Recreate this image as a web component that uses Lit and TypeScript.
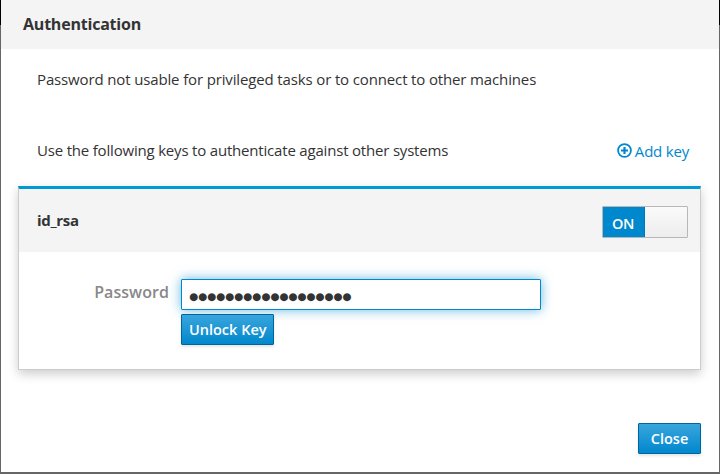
import { LitElement, html, css } from "lit";
import { customElement, state } from "lit/decorators.js";

@customElement("app-root")
export class AppRoot extends LitElement {
  static styles = css`
    :host {
      display: block;
      box-sizing: border-box;
      height: 474px;
      padding: 0 1px 2px;
      background: linear-gradient(#000 25px, #666 25px);
      font: 15px/20px "Open Sans", sans-serif;
      color: #333;
    }
    * { box-sizing: border-box; }
    .dialog {
      height: 472px;
      background: #fff;
      display: flex;
      flex-direction: column;
    }
    .header {
      height: 49px;
      flex: none;
      padding: 14px 22px 0;
      background: #f4f4f4;
      font-size: 16px;
      font-weight: 700;
      letter-spacing: -0.21px;
    }
    .title { display: inline-block; }
    .body { padding: 20px 18px 0 17px; flex: 1; }
    .note { padding-left: 19px; letter-spacing: -0.14px; }
    .row {
      display: flex;
      justify-content: space-between;
      padding: 0 12px 0 19px;
      margin-top: 51px;
    }
    .intro { letter-spacing: -0.19px; }
    .add {
      display: flex;
      gap: 3px;
      color: #0088ce;
      cursor: pointer;
      padding-top: 1px;
    }
    .add svg { width: 15px; height: 15px; margin-top: 2px; }
    .add-text { letter-spacing: -0.2px; }
    .card {
      margin-top: 25px;
      height: 184px;
      border: 1px solid #ccc;
      border-top: 3px solid #0099d3;
      box-shadow: 0 4px 10px rgba(0, 0, 0, 0.2);
    }
    .card-head {
      display: flex;
      justify-content: space-between;
      align-items: flex-start;
      height: 63px;
      padding: 17px 12px 0 18px;
      background: #f4f4f4;
    }
    .name { font-weight: 700; padding-top: 4px; letter-spacing: -0.3px; }
    .toggle {
      display: flex;
      width: 86px;
      height: 32px;
      border: 1px solid #b7b7b7;
      border-radius: 1px;
      background: linear-gradient(#fafafa, #ededed);
    }
    .on {
      width: 42px;
      padding-right: 1px;
      border-right: 1px solid #0077b8;
      background: #0088ce;
      color: #fff;
      font-size: 14.5px;
      font-weight: 600;
      line-height: 33px;
      letter-spacing: -0.3px;
      text-align: center;
    }
    .form {
      display: grid;
      grid-template-columns: 150px 360px;
      column-gap: 12px;
      row-gap: 4px;
      padding-top: 27px;
    }
    label {
      text-align: right;
      color: #888;
      font-size: 16px;
      font-weight: 600;
      letter-spacing: 0.06px;
      padding-top: 3px;
    }
    input {
      height: 31px;
      border: 1px solid #0088ce;
      border-radius: 1px;
      padding: 3px 7px 0;
      color: #333;
      font: 10.4px/20px "DejaVu Sans", sans-serif;
      letter-spacing: -0.05px;
      box-shadow: 0 0 12px rgba(0, 136, 206, 0.6);
      outline: none;
    }
    button {
      height: 31px;
      padding: 0 7px;
      border: 1px solid #00659c;
      border-radius: 1px;
      background: linear-gradient(#39a5dc, #0088ce);
      box-shadow: 0 2px 3px rgba(3, 3, 3, 0.1);
      color: #fff;
      font: 600 14.5px/20px "Open Sans", sans-serif;
      white-space: nowrap;
    }
    .unlock { position: relative; grid-column: 2; width: 93px; }
    .footer {
      display: flex;
      justify-content: flex-end;
      padding: 0 18px 18px;
    }
    .close { width: 63px; }
  `;

  @state() private password = "●".repeat(18);

  render() {
    return html`
      <div class="dialog">
        <div class="header"><span class="title">Authentication</span></div>
        <div class="body">
          <div class="note">Password not usable for privileged tasks or to connect to other machines</div>
          <div class="row">
            <span class="intro">Use the following keys to authenticate against other systems</span>
            <a class="add">
              <svg viewBox="0 0 15 15" fill="none" stroke="currentColor">
                <circle cx="7.5" cy="7.5" r="6.4" stroke-width="1.8" />
                <path d="M7.5 4v7M4 7.5h7" stroke-width="2.2" />
              </svg>
              <span class="add-text">Add key</span>
            </a>
          </div>
          <div class="card">
            <div class="card-head">
              <span class="name">id_rsa</span>
              <div class="toggle"><span class="on">ON</span></div>
            </div>
            <div class="form">
              <label for="pw">Password</label>
              <input id="pw" type="text" .value=${this.password} />
              <button class="unlock">Unlock Key</button>
            </div>
          </div>
        </div>
        <div class="footer"><button class="close">Close</button></div>
      </div>
    `;
  }
}
